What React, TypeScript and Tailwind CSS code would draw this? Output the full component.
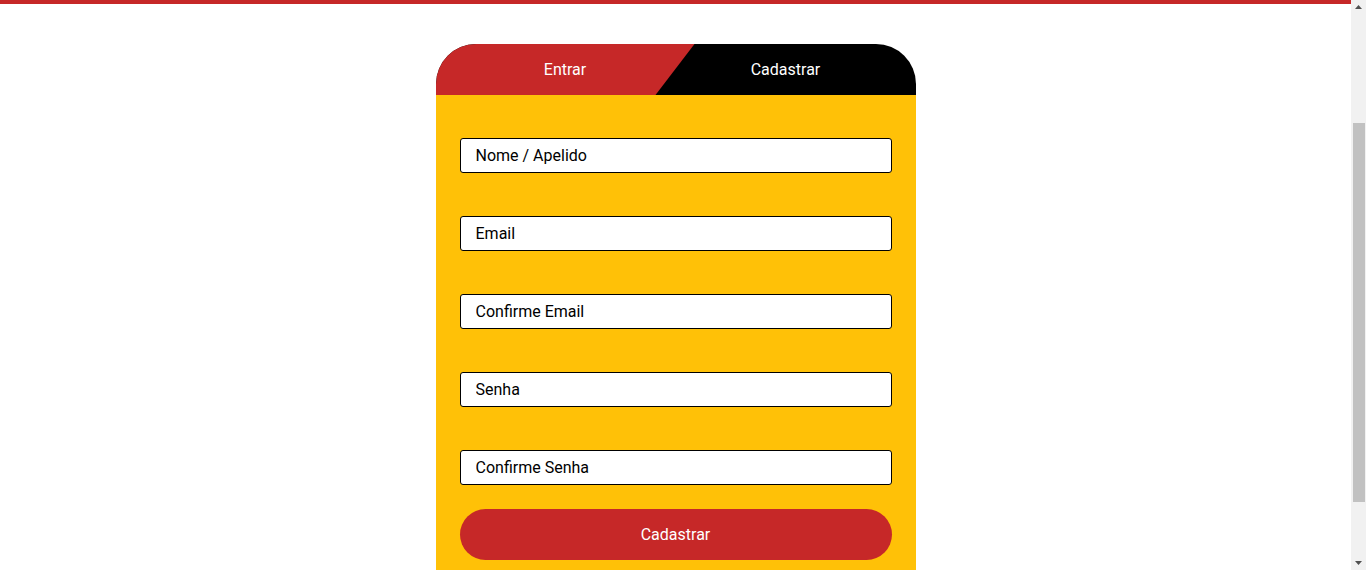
import React from "react";

export default function App() {
  const fields = ["Nome / Apelido", "Email", "Confirme Email", "Senha", "Confirme Senha"];
  return (
    <div className="flex h-[570px] overflow-hidden bg-white" style={{ fontFamily: "Roboto, 'Liberation Sans', sans-serif" }}>
      <div className="flex-1">
        <div className="h-[4px] bg-[#c62828]" />
        <div className="flex justify-center pt-[40px]">
          <div className="w-[480px]">
            <div className="flex h-[51px] overflow-hidden rounded-t-[40px] bg-black text-base text-white">
              <button className="relative z-10 flex w-[259px] shrink-0 items-center justify-center bg-[#c62828] [clip-path:polygon(0_0,100%_0,220px_100%,0_100%)]">
                Entrar
              </button>
              <button className="-ml-[39px] flex flex-1 items-center justify-center">Cadastrar</button>
            </div>
            <div className="flex flex-col bg-[#ffc107] px-6 pt-[43px] pb-6">
              <div className="flex flex-col gap-[43px]">
                {fields.map((f) => (
                  <input
                    key={f}
                    placeholder={f}
                    className="h-[35px] w-full rounded-[3px] border border-black bg-white px-[15px] text-base text-black outline-none placeholder:text-black"
                  />
                ))}
              </div>
              <button className="mt-6 h-[51px] w-full rounded-full bg-[#c62828] text-base text-white">Cadastrar</button>
            </div>
          </div>
        </div>
      </div>
      <div className="flex w-[15px] shrink-0 flex-col items-center bg-[#f1f1f1]">
        <svg width="7" height="4" viewBox="0 0 7 4" className="mt-[5px] shrink-0">
          <polygon points="3.5,0 7,4 0,4" fill="#505050" />
        </svg>
        <div className="mt-[114px] h-[379px] w-[12px] shrink-0 bg-[#c1c1c1]" />
        <svg width="7" height="4" viewBox="0 0 7 4" className="mt-auto mb-[5px] shrink-0">
          <polygon points="0,0 7,0 3.5,4" fill="#505050" />
        </svg>
      </div>
    </div>
  );
}
